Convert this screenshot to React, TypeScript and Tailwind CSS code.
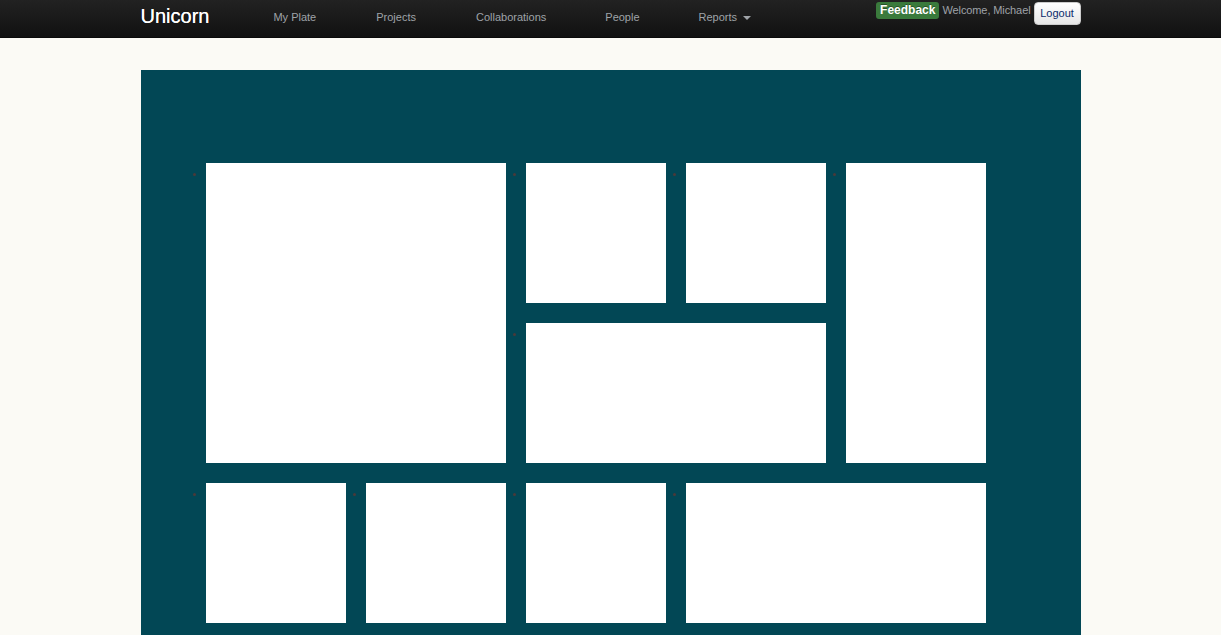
import React from 'react';

const navLinks = [
  { label: 'My Plate', left: 'ml-[64px]' },
  { label: 'Projects', left: 'ml-[60px]' },
  { label: 'Collaborations', left: 'ml-[60px]' },
  { label: 'People', left: 'ml-[59px]' },
];

// tiles in grid order: [colSpan, rowSpan]
const tiles: Array<[number, number]> = [
  [2, 2],
  [1, 1],
  [1, 1],
  [1, 2],
  [2, 1],
  [1, 1],
  [1, 1],
  [1, 1],
  [2, 1],
];

const spanClass: Record<string, string> = {
  '1x1': 'col-span-1 row-span-1',
  '2x2': 'col-span-2 row-span-2',
  '1x2': 'col-span-1 row-span-2',
  '2x1': 'col-span-2 row-span-1',
};

export default function App() {
  return (
    <div className="min-h-[635px] bg-[#fbfaf5] font-['Liberation_Sans',Arial,sans-serif]">
      {/* Navbar */}
      <div className="h-[38px] bg-gradient-to-b from-[#222222] to-[#111111] border-b border-[#0a0a0a]">
        <div className="w-[940px] mx-auto flex items-start h-full relative">
          <span className="mt-[4px] text-[20px] leading-[24px] text-white [text-shadow:0_0_0.4px_#fff]">Unicorn</span>
          {navLinks.map((l) => (
            <a key={l.label} className={`${l.left} mt-[10px] text-[11px] leading-[14px] text-[#9fa3a8]`}>
              {l.label}
            </a>
          ))}
          <a className="ml-[59px] mt-[10px] text-[11px] leading-[14px] text-[#9fa3a8] flex items-center">
            Reports
            <span className="ml-[6px] mt-[1px] w-0 h-0 border-l-[4px] border-r-[4px] border-t-[4px] border-l-transparent border-r-transparent border-t-[#9fa3a8]" />
          </a>
          <div className="ml-auto flex items-start">
            <span className="mt-[2px] h-[17px] px-[4px] rounded-[3px] bg-[#3a7a3c] text-white font-bold text-[12px] leading-[17px] [text-shadow:0_-1px_0_rgba(0,0,0,0.35)]">
              Feedback
            </span>
            <span className="ml-[3px] mt-[3px] text-[11px] leading-[14px] text-[#9fa3a8] tracking-[-0.1px]">Welcome, Michael</span>
            <button className="ml-[3px] mt-[2px] h-[23px] w-[47px] rounded-[4px] border border-[#cccccc] bg-gradient-to-b from-white to-[#e6e6e6] text-[11px] text-[#0b2a6b] leading-[21px]">
              Logout
            </button>
          </div>
        </div>
      </div>

      {/* Content */}
      <div className="w-[940px] mx-auto mt-[32px] bg-[#024755] h-[565px] pt-[93px] pl-[65px]">
        <ul className="grid grid-cols-[repeat(5,140px)] auto-rows-[140px] gap-5">
          {tiles.map(([c, r], i) => (
            <li key={i} className={`${spanClass[`${c}x${r}`]} relative bg-white`}>
              <span className="absolute left-[-13px] top-[10px] w-[3px] h-[3px] rounded-full bg-[#4a3a3a]" />
            </li>
          ))}
        </ul>
      </div>
    </div>
  );
}
